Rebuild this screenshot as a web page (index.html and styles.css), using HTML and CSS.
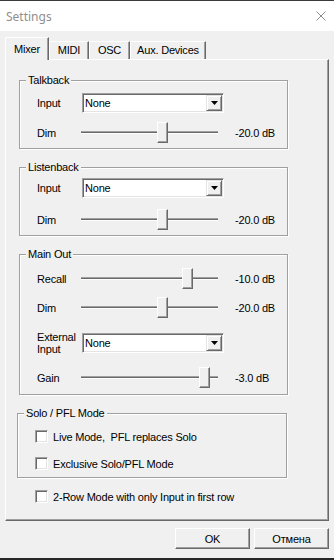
FILE: index.html
```html
<!DOCTYPE html>
<html lang="en">
<head>
  <meta charset="UTF-8" />
  <title>Settings</title>
  <link rel="stylesheet" href="styles.css">
</head>
<body>
  <div class="window">
    <div class="titlebar">
      <span class="title">Settings</span>
      <svg class="close" width="10" height="10" viewBox="0 0 10 10"><path d="M0.5 0.5L9.5 9.5M9.5 0.5L0.5 9.5" stroke="#8a8a8a" stroke-width="1"/></svg>
    </div>

    <div class="content">
      <div class="tabs">
        <div class="tab active">Mixer</div>
        <div class="tab midi">MIDI</div>
        <div class="tab osc">OSC</div>
        <div class="tab aux">Aux. Devices</div>
      </div>

      <div class="panel">
        <div class="group talkback">
          <div class="legend">Talkback</div>
          <div class="row">
            <span class="label">Input</span>
            <div class="select"><span class="sel-text">None</span><span class="arrow"><svg width="7" height="4" viewBox="0 0 7 4"><path d="M0 0H7L3.5 4Z" fill="#000"/></svg></span></div>
          </div>
          <div class="row gap9">
            <span class="label">Dim</span>
            <div class="slider"><div class="thumb" style="left:76px"></div></div>
            <span class="value">-20.0 dB</span>
          </div>
        </div>

        <div class="group listenback">
          <div class="legend">Listenback</div>
          <div class="row">
            <span class="label">Input</span>
            <div class="select"><span class="sel-text">None</span><span class="arrow"><svg width="7" height="4" viewBox="0 0 7 4"><path d="M0 0H7L3.5 4Z" fill="#000"/></svg></span></div>
          </div>
          <div class="row gap11">
            <span class="label">Dim</span>
            <div class="slider"><div class="thumb" style="left:76px"></div></div>
            <span class="value">-20.0 dB</span>
          </div>
        </div>

        <div class="group mainout">
          <div class="legend">Main Out</div>
          <div class="row">
            <span class="label">Recall</span>
            <div class="slider"><div class="thumb" style="left:101px"></div></div>
            <span class="value">-10.0 dB</span>
          </div>
          <div class="row gap8">
            <span class="label">Dim</span>
            <div class="slider"><div class="thumb" style="left:76px"></div></div>
            <span class="value">-20.0 dB</span>
          </div>
          <div class="row gap13">
            <span class="label two-line">External<br>Input</span>
            <div class="select"><span class="sel-text">None</span><span class="arrow"><svg width="7" height="4" viewBox="0 0 7 4"><path d="M0 0H7L3.5 4Z" fill="#000"/></svg></span></div>
          </div>
          <div class="row gap12">
            <span class="label">Gain</span>
            <div class="slider"><div class="thumb" style="left:118px"></div></div>
            <span class="value">-3.0 dB</span>
          </div>
        </div>

        <div class="group solo">
          <div class="legend">Solo / PFL Mode</div>
          <label class="check"><span class="box"></span>Live Mode,&nbsp; PFL replaces Solo</label>
          <label class="check gap14"><span class="box"></span>Exclusive Solo/PFL Mode</label>
        </div>

        <label class="check tworow"><span class="box"></span>2-Row Mode with only Input in first row</label>
      </div>

      <div class="buttons">
        <button class="btn">OK</button>
        <button class="btn">Отмена</button>
      </div>
    </div>
  </div>
</body>
</html>
```

FILE: styles.css
```css
body {
  margin: 0;
  background: #f0f0f0;
  font-family: "Liberation Sans", Arial, sans-serif;
  font-size: 11px;
  letter-spacing: -0.2px;
  color: #000;
}
.window {
  width: 334px;
  height: 560px;
  box-sizing: border-box;
  border-top: 1px solid #3a3a3a;
  border-bottom: 2px solid #262626;
  display: flex;
  flex-direction: column;
}
.titlebar {
  height: 30px;
  background: #fff;
  display: flex;
  align-items: center;
  justify-content: space-between;
  padding: 0 8px 0 6px;
}
.title {
  font-family: "Noto Sans", sans-serif;
  font-size: 12px;
  letter-spacing: 0;
  color: #8f8f8f;
}
.content {
  flex: 1;
  padding-top: 6px;
}

/* tabs */
.tabs {
  display: flex;
  align-items: flex-end;
  height: 22px;
  padding-left: 5px;
}
.tab {
  box-sizing: border-box;
  height: 18px;
  line-height: 17px;
  text-align: center;
  background: #f0f0f0;
  border-top: 1px solid #fff;
  border-left: 1px solid #fff;
  border-right: 1px solid #696969;
  box-shadow: inset -1px 0 0 #a0a0a0;
}
.tab.active {
  position: relative;
  z-index: 1;
  width: 44px;
  height: 23px;
  margin-bottom: -1px;
  line-height: 22px;
  padding-bottom: 2px;
}
.midi { width: 40px; }
.osc { width: 41px; }
.aux { width: 76px; }

.panel {
  box-sizing: border-box;
  width: 324px;
  height: 462px;
  margin-left: 5px;
  border-top: 1px solid #fff;
  border-left: 1px solid #fff;
  border-right: 1px solid #696969;
  border-bottom: 1px solid #696969;
  box-shadow: inset -1px -1px 0 #a0a0a0;
  padding-top: 20px;
}

/* group boxes */
.group {
  box-sizing: border-box;
  width: 269px;
  margin-left: 13px;
  border: 1px solid #a0a0a0;
  box-shadow: inset 1px 1px 0 #fff, 1px 1px 0 #fff;
}
.legend {
  width: fit-content;
  line-height: 13px;
  margin: -7px 0 0 6px;
  padding: 0 2px;
  background: #f0f0f0;
}
.talkback { padding-bottom: 5px; }
.talkback .legend { margin-bottom: 6px; }
.listenback { margin-top: 18px; padding-bottom: 5px; }
.listenback .legend { margin-bottom: 4px; }
.mainout { margin-top: 18px; padding-bottom: 6px; }
.mainout .legend { margin-bottom: 7px; }
.solo { margin-top: 18px; margin-left: 11px; width: 270px; padding-bottom: 7px; }
.solo .legend { margin-bottom: 10px; }

.row {
  display: flex;
  align-items: center;
  padding-left: 17px;
}
.gap8 { margin-top: 8px; }
.gap9 { margin-top: 9px; }
.gap11 { margin-top: 11px; }
.gap12 { margin-top: 12px; }
.gap13 { margin-top: 13px; }
.gap14 { margin-top: 14px; }
.label {
  width: 44px;
  flex-shrink: 0;
}
.two-line { line-height: 12px; }

/* combo box */
.select {
  box-sizing: border-box;
  width: 142px;
  height: 20px;
  margin-left: 1px;
  background: #fff;
  border: 1px solid;
  border-color: #a0a0a0 #fff #fff #a0a0a0;
  box-shadow: inset 1px 1px 0 #696969, inset -1px -1px 0 #e3e3e3;
  display: flex;
  align-items: center;
  justify-content: space-between;
  padding: 1px 1px 1px 2px;
}
.arrow {
  box-sizing: border-box;
  width: 16px;
  height: 16px;
  background: #f0f0f0;
  border: 1px solid;
  border-color: #e3e3e3 #696969 #696969 #e3e3e3;
  box-shadow: inset 1px 1px 0 #fff, inset -1px -1px 0 #a0a0a0;
  display: flex;
  align-items: center;
  justify-content: center;
}

/* trackbar */
.slider {
  position: relative;
  width: 137px;
  height: 21px;
}
.slider::before {
  content: "";
  position: absolute;
  left: 0;
  right: 0;
  top: 9px;
  box-sizing: border-box;
  height: 3px;
  border-top: 1px solid #a0a0a0;
  border-bottom: 1px solid #fff;
  background: #696969;
}
.thumb {
  position: absolute;
  top: 0;
  box-sizing: border-box;
  width: 11px;
  height: 21px;
  background: #f0f0f0;
  border: 1px solid;
  border-color: #fff #696969 #696969 #fff;
  box-shadow: inset -1px -1px 0 #a0a0a0;
}
.value {
  margin-left: 17px;
}

/* check boxes */
.check {
  display: flex;
  align-items: center;
  height: 13px;
  padding-left: 17px;
}
.box {
  box-sizing: border-box;
  width: 13px;
  height: 13px;
  margin-right: 5px;
  background: #fff;
  border: 1px solid;
  border-color: #a0a0a0 #fff #fff #a0a0a0;
  box-shadow: inset 1px 1px 0 #696969, inset -1px -1px 0 #e3e3e3;
}
.tworow {
  margin-top: 12px;
  padding-left: 29px;
}

/* dialog buttons */
.buttons {
  display: flex;
  justify-content: flex-end;
  gap: 4px;
  margin-top: 7px;
  padding-right: 5px;
}
.btn {
  box-sizing: border-box;
  width: 75px;
  height: 21px;
  font-family: "Liberation Sans", Arial, sans-serif;
  font-size: 11px;
  letter-spacing: -0.2px;
  color: #000;
  background: #f0f0f0;
  border: 1px solid;
  border-color: #fff #696969 #696969 #fff;
  box-shadow: inset -1px -1px 0 #a0a0a0;
  padding: 0;
}
```
